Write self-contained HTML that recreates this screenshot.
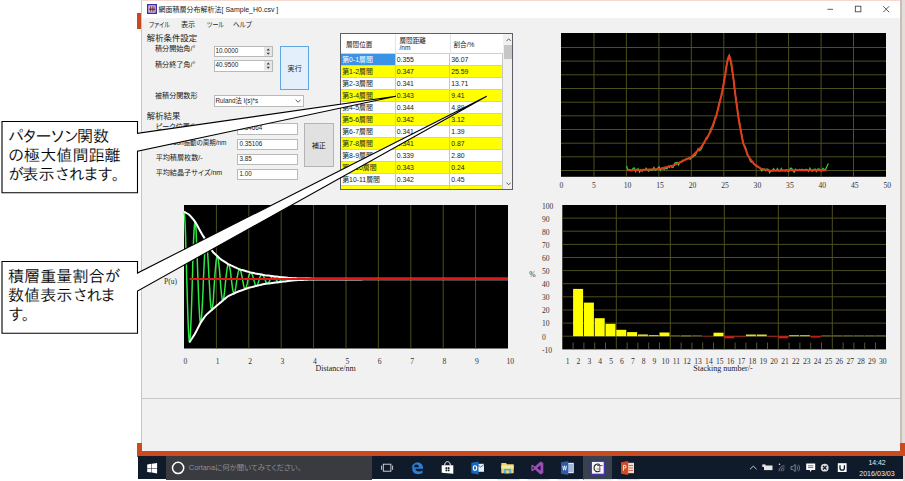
<!DOCTYPE html>
<html lang="ja"><head><meta charset="utf-8"><title>網面積層分布解析法</title>
<style>
html,body{margin:0;padding:0}
body{width:905px;height:481px;overflow:hidden;background:#fff;position:relative;font-family:"Liberation Sans","Noto Sans CJK JP",sans-serif;color:#111}
.a{position:absolute}
.ui{font-size:7.1px;line-height:9px;white-space:nowrap;color:#1a1a1a;font-feature-settings:"palt"}
.h{font-size:8.4px;line-height:10px;white-space:nowrap;color:#1a1a1a;font-feature-settings:"palt"}
.in{position:absolute;background:#fff;border:1px solid #b9b9b9;box-sizing:border-box;font-size:6.3px;line-height:8.4px;padding-left:1px;color:#222;white-space:nowrap;overflow:hidden}
#win{left:141.5px;top:1.2px;width:758.5px;height:450.3px;background:#f1f1f1}
#ttl{left:141.5px;top:1.2px;width:758.5px;height:17.3px;background:#fff}
#tbl{left:340px;top:33px;width:173px;height:157px;background:#fff;border:1px solid #5c5f66;box-sizing:border-box;overflow:hidden}
#tbl .hd{position:absolute;left:0;top:0;width:162px;height:20px;border-bottom:1px solid #cfcfcf;box-sizing:border-box}
#tbl .r{position:absolute;left:0;width:162px;box-sizing:border-box;border-bottom:1px solid #cdcdcd;background:#fff}
#tbl .r.y{background:#ffff00}
#tbl .c{position:absolute;top:0;height:100%;box-sizing:border-box;border-right:1px solid #c6c6c6;font-size:6.9px;line-height:11px;padding-left:1.2px;white-space:nowrap;color:#222;overflow:hidden}
#tbl .c1{left:0;width:54.5px;padding-left:1.2px}
#tbl .c2{left:54.5px;width:54.5px}
#tbl .c3{left:109px;width:53px}
#tbl .sel{background:#3a93e6;color:#fff}
#tbl .hc{position:absolute;font-size:6.6px;line-height:7.4px;white-space:nowrap;color:#222}
#tbl .vl{position:absolute;top:0;width:1px;height:19.5px;background:#e4e4e4}
svg text.tk{font-family:"Liberation Serif",serif;font-size:7.6px;fill:#333}
svg text.ax{font-family:"Liberation Serif",serif;font-size:8px;fill:#222}
.co .k{letter-spacing:-2.3px}
.co{position:absolute;left:8px;-webkit-text-stroke:0.12px #fff;font-family:"IPAGothic","Noto Sans CJK JP",sans-serif;font-size:16.1px;line-height:19.3px;color:#000;white-space:nowrap}
#tb{left:137.5px;top:456.3px;width:765px;height:23.2px;background:#0f1a2b}
.tbt{position:absolute;color:#e8e8e8;font-size:6.9px;line-height:8px;white-space:nowrap;text-align:center}
</style></head><body>
<!-- backdrop -->
<div class="a" style="left:141px;top:0;width:764px;height:1.3px;background:#f7d8ce"></div>
<div class="a" style="left:900px;top:0;width:5px;height:445px;background:#e2dedc"></div><div class="a" style="left:900.3px;top:0;width:1.7px;height:445px;background:#cbbdb2"></div>
<div class="a" style="left:137px;top:13px;width:5px;height:15.5px;background:#c8491f"></div>
<div class="a" style="left:137px;top:443px;width:768px;height:13.5px;background:#cc4a1d"></div>
<div class="a" style="left:140.5px;top:1px;width:1px;height:442px;background:#c9c2bd"></div>
<div class="a" id="win"></div>
<div class="a" id="ttl"></div>
<div class="a" style="left:141.5px;top:398px;width:758.5px;height:1px;background:#cbc5cc"></div>

<!-- title bar -->
<svg class="a" style="left:146.5px;top:3.5px" width="10" height="10" viewBox="0 0 10 10"><rect x="0.7" y="0.7" width="8.6" height="8.6" fill="#efe2ee" stroke="#3a2fb0" stroke-width="1.4"/><path d="M3.3 2.2v5.6M5.2 2.2v5.6M7 2.2v5.6" stroke="#7a2030" stroke-width="1"/><path d="M2 5.2h6" stroke="#201a70" stroke-width="0.9"/></svg>
<div class="a ui" style="left:158.5px;top:4.6px;font-size:7px;color:#222">網面積層分布解析法[ Sample_H0.csv ]</div>
<svg class="a" style="left:820px;top:2px" width="80" height="16" viewBox="0 0 80 16"><path d="M7.5 7.3h5.5" stroke="#333" stroke-width="0.8"/><rect x="35.3" y="4.2" width="5.6" height="5.6" fill="none" stroke="#333" stroke-width="0.8"/><path d="M63.2 4.2l6 6M69.2 4.2l-6 6" stroke="#333" stroke-width="0.8"/></svg>

<!-- menu -->
<div class="a ui" style="left:149px;top:21.2px;transform:scaleX(0.85);transform-origin:0 0">ファイル</div>
<div class="a ui" style="left:181px;top:21.2px">表示</div>
<div class="a ui" style="left:207px;top:21.2px;transform:scaleX(0.84);transform-origin:0 0">ツール</div>
<div class="a ui" style="left:233.3px;top:21.2px;transform:scaleX(0.93);transform-origin:0 0">ヘルプ</div>

<!-- settings -->
<div class="a h" style="left:146.8px;top:33px">解析条件設定</div>
<div class="a ui" style="left:155px;top:45px">積分開始角/°</div>
<div class="a ui" style="left:155px;top:61px">積分終了角/°</div>
<div class="in" style="left:213.5px;top:45.6px;width:59.5px;height:11.2px">10.0000</div>
<div class="in" style="left:213.5px;top:60.4px;width:59.5px;height:11.2px">40.9500</div>
<svg class="a" style="left:263.5px;top:46.6px" width="8.5" height="9.4" viewBox="0 0 8.5 9.4"><rect width="8.5" height="9.4" fill="#e6e6e6"/><path d="M2.6 3.6L4.25 1.6L5.9 3.6Z M2.6 5.8L4.25 7.8L5.9 5.8Z" fill="#333"/></svg>
<svg class="a" style="left:263.5px;top:61.4px" width="8.5" height="9.4" viewBox="0 0 8.5 9.4"><rect width="8.5" height="9.4" fill="#e6e6e6"/><path d="M2.6 3.6L4.25 1.6L5.9 3.6Z M2.6 5.8L4.25 7.8L5.9 5.8Z" fill="#333"/></svg>
<div class="a ui" style="left:280px;top:45.6px;width:29.3px;height:44px;box-sizing:border-box;background:#e3f0fb;border:1px solid #5fa5e2;text-align:center;line-height:45px">実行</div>
<div class="a ui" style="left:155px;top:92px">被積分関数形</div>
<div class="in" style="left:213.5px;top:94.6px;width:90.2px;height:12.4px;line-height:10.4px">Ruland法 I(s)*s</div>
<svg class="a" style="left:295px;top:98.8px" width="6.4" height="4.2" viewBox="0 0 6 4"><path d="M0.6 0.6L3 3.1L5.4 0.6" fill="none" stroke="#444" stroke-width="0.8"/></svg>

<!-- results -->
<div class="a h" style="left:146.8px;top:111.2px">解析結果</div>
<div class="a ui" style="left:155.7px;top:122.7px">ピーク位置/°</div>
<div class="a ui" style="left:155.7px;top:139.3px;transform:scaleX(0.91);transform-origin:0 0">Patterson振動の周期/nm</div>
<div class="a ui" style="left:155.7px;top:154.3px">平均積層枚数/-</div>
<div class="a ui" style="left:155.7px;top:169.1px">平均結晶子サイズ/nm</div>
<div class="in" style="left:237.4px;top:123.4px;width:60.3px;height:11.3px">0.34664</div>
<div class="in" style="left:237.4px;top:138.5px;width:60.3px;height:11.3px">0.35106</div>
<div class="in" style="left:237.4px;top:153.6px;width:60.3px;height:11.3px">3.85</div>
<div class="in" style="left:237.4px;top:168.7px;width:60.3px;height:11.3px">1.00</div>
<div class="a ui" style="left:304.2px;top:123.4px;width:29.4px;height:43.6px;box-sizing:border-box;background:#e1e1e1;border:1px solid #b4b4b4;text-align:center;line-height:45px">補正</div>

<!-- table -->
<div class="a" id="tbl">
<div class="hd"></div>
<div class="vl" style="left:54px"></div><div class="vl" style="left:108.5px"></div><div class="vl" style="left:161.5px"></div>
<div class="hc" style="left:5px;top:6.8px">層間位置</div>
<div class="hc" style="left:58.5px;top:3px">層間距離<br>/nm</div>
<div class="hc" style="left:112.5px;top:6.8px">割合/%</div>
<div class="r" style="top:20.4px;height:12.0px"><div class="c c1 sel">第0-1層間</div><div class="c c2">0.355</div><div class="c c3">36.07</div></div><div class="r y" style="top:32.4px;height:12.0px"><div class="c c1">第1-2層間</div><div class="c c2">0.347</div><div class="c c3">25.59</div></div><div class="r" style="top:44.4px;height:12.0px"><div class="c c1">第2-3層間</div><div class="c c2">0.341</div><div class="c c3">13.71</div></div><div class="r y" style="top:56.4px;height:12.0px"><div class="c c1">第3-4層間</div><div class="c c2">0.343</div><div class="c c3">9.41</div></div><div class="r" style="top:68.4px;height:12.0px"><div class="c c1">第4-5層間</div><div class="c c2">0.344</div><div class="c c3">4.89</div></div><div class="r y" style="top:80.4px;height:12.0px"><div class="c c1">第5-6層間</div><div class="c c2">0.342</div><div class="c c3">3.12</div></div><div class="r" style="top:92.4px;height:12.0px"><div class="c c1">第6-7層間</div><div class="c c2">0.341</div><div class="c c3">1.39</div></div><div class="r y" style="top:104.4px;height:12.0px"><div class="c c1">第7-8層間</div><div class="c c2">0.341</div><div class="c c3">0.87</div></div><div class="r" style="top:116.4px;height:12.0px"><div class="c c1">第8-9層間</div><div class="c c2">0.339</div><div class="c c3">2.80</div></div><div class="r y" style="top:128.4px;height:12.0px"><div class="c c1">第9-10層間</div><div class="c c2">0.343</div><div class="c c3">0.24</div></div><div class="r" style="top:140.4px;height:12.0px"><div class="c c1">第10-11層間</div><div class="c c2">0.342</div><div class="c c3">0.45</div></div><div class="r y" style="top:152.4px;height:3.5px"><div class="c c1"></div><div class="c c2"></div><div class="c c3"></div></div>
<div class="a" style="left:162px;top:0;width:10px;height:155px;background:#f0f0f0"></div>
<div class="a" style="left:163.3px;top:10.8px;width:7.6px;height:14px;background:#c6c6c6"></div>
<svg class="a" style="left:164.5px;top:4px" width="5.4" height="3.6" viewBox="0 0 6 4"><path d="M0.6 3.4L3 0.9L5.4 3.4" fill="none" stroke="#444" stroke-width="0.9"/></svg>
<svg class="a" style="left:164.5px;top:148.3px" width="5.4" height="3.6" viewBox="0 0 6 4"><path d="M0.6 0.6L3 3.1L5.4 0.6" fill="none" stroke="#444" stroke-width="0.9"/></svg>
</div>

<!-- charts -->
<svg class="a" style="left:0;top:0" width="905" height="481" viewBox="0 0 905 481">
<rect x="184.0" y="205.0" width="324.0" height="143.5" fill="#000"/><line x1="216.4" y1="205.0" x2="216.4" y2="348.5" stroke="#4e4e1e" stroke-width="1"/><line x1="248.8" y1="205.0" x2="248.8" y2="348.5" stroke="#4e4e1e" stroke-width="1"/><line x1="281.2" y1="205.0" x2="281.2" y2="348.5" stroke="#4e4e1e" stroke-width="1"/><line x1="313.6" y1="205.0" x2="313.6" y2="348.5" stroke="#4e4e1e" stroke-width="1"/><line x1="346.0" y1="205.0" x2="346.0" y2="348.5" stroke="#4e4e1e" stroke-width="1"/><line x1="378.4" y1="205.0" x2="378.4" y2="348.5" stroke="#4e4e1e" stroke-width="1"/><line x1="410.8" y1="205.0" x2="410.8" y2="348.5" stroke="#4e4e1e" stroke-width="1"/><line x1="443.2" y1="205.0" x2="443.2" y2="348.5" stroke="#4e4e1e" stroke-width="1"/><line x1="475.6" y1="205.0" x2="475.6" y2="348.5" stroke="#4e4e1e" stroke-width="1"/><path d="M184.0 211.6 L184.1 211.8 L184.2 212.1 L184.3 212.7 L184.4 213.4 L184.5 214.4 L184.6 215.5 L184.7 216.9 L184.8 218.4 L184.9 220.1 L185.0 222.0 L185.1 224.0 L185.2 226.2 L185.3 228.6 L185.4 231.1 L185.5 233.7 L185.6 236.5 L185.7 239.4 L185.7 242.4 L185.8 245.5 L185.9 248.7 L186.0 252.0 L186.1 255.4 L186.2 258.8 L186.3 262.3 L186.4 265.8 L186.5 269.4 L186.6 273.0 L186.7 276.6 L186.8 280.2 L186.9 283.7 L187.0 287.3 L187.1 290.8 L187.2 294.2 L187.3 297.6 L187.4 301.0 L187.5 304.3 L187.6 307.4 L187.7 310.5 L187.8 313.5 L187.9 316.4 L188.0 319.2 L188.1 321.8 L188.2 324.3 L188.3 326.7 L188.4 328.9 L188.5 331.0 L188.6 332.9 L188.7 334.6 L188.8 336.2 L188.9 337.6 L189.0 338.8 L189.1 339.8 L189.2 340.7 L189.2 341.3 L189.3 341.8 L189.4 342.1 L189.5 342.1 L189.6 342.0 L189.7 341.6 L189.8 341.0 L189.9 340.3 L190.0 339.4 L190.1 338.3 L190.2 337.0 L190.3 335.6 L190.4 334.0 L190.5 332.2 L190.6 330.3 L190.7 328.3 L190.8 326.1 L190.9 323.7 L191.0 321.3 L191.1 318.7 L191.2 316.1 L191.3 313.3 L191.4 310.4 L191.5 307.5 L191.6 304.5 L191.7 301.4 L191.8 298.3 L191.9 295.1 L192.0 291.9 L192.1 288.7 L192.2 285.5 L192.3 282.2 L192.4 279.0 L192.5 275.7 L192.6 272.4 L192.7 269.1 L192.7 265.9 L192.8 262.7 L192.9 259.6 L193.0 256.6 L193.1 253.6 L193.2 250.8 L193.3 248.0 L193.4 245.3 L193.5 242.8 L193.6 240.3 L193.7 238.0 L193.8 235.8 L193.9 233.8 L194.0 231.9 L194.1 230.1 L194.2 228.5 L194.3 227.1 L194.4 225.8 L194.5 224.7 L194.6 223.8 L194.7 223.0 L194.8 222.4 L194.9 222.0 L195.0 221.7 L195.1 221.7 L195.2 221.8 L195.3 222.1 L195.4 222.6 L195.5 223.3 L195.6 224.1 L195.7 225.1 L195.8 226.2 L195.9 227.5 L196.0 228.9 L196.1 230.5 L196.2 232.2 L196.2 234.1 L196.3 236.0 L196.4 238.1 L196.5 240.3 L196.6 242.6 L196.7 245.0 L196.8 247.5 L196.9 250.0 L197.0 252.6 L197.1 255.3 L197.2 258.1 L197.3 260.9 L197.4 263.7 L197.5 266.5 L197.6 269.4 L197.7 272.3 L197.8 275.2 L197.9 278.0 L198.0 280.8 L198.1 283.4 L198.2 286.1 L198.3 288.6 L198.4 291.2 L198.5 293.6 L198.6 296.0 L198.7 298.4 L198.8 300.6 L198.9 302.8 L199.0 304.9 L199.1 306.9 L199.2 308.8 L199.3 310.5 L199.4 312.2 L199.5 313.8 L199.6 315.2 L199.6 316.5 L199.7 317.7 L199.8 318.8 L199.9 319.7 L200.0 320.5 L200.1 321.2 L200.2 321.7 L200.3 322.1 L200.4 322.4 L200.5 322.5 L200.6 322.6 L200.7 322.5 L200.8 322.3 L200.9 322.0 L201.0 321.5 L201.1 320.9 L201.2 320.2 L201.3 319.4 L201.4 318.5 L201.5 317.4 L201.6 316.2 L201.7 315.0 L201.8 313.6 L201.9 312.1 L202.0 310.6 L202.1 308.9 L202.2 307.2 L202.3 305.4 L202.4 303.6 L202.5 301.6 L202.6 299.7 L202.7 297.6 L202.8 295.6 L202.9 293.5 L203.0 291.3 L203.1 289.2 L203.1 287.0 L203.2 284.8 L203.3 282.6 L203.4 280.4 L203.5 278.2 L203.6 275.9 L203.7 273.6 L203.8 271.4 L203.9 269.2 L204.0 267.0 L204.1 264.9 L204.2 262.9 L204.3 260.9 L204.4 259.0 L204.5 257.1 L204.6 255.4 L204.7 253.7 L204.8 252.1 L204.9 250.6 L205.0 249.2 L205.1 247.9 L205.2 246.8 L205.3 245.7 L205.4 244.7 L205.5 243.9 L205.6 243.1 L205.7 242.5 L205.8 242.0 L205.9 241.6 L206.0 241.3 L206.1 241.1 L206.2 241.1 L206.3 241.1 L206.4 241.3 L206.5 241.6 L206.6 242.0 L206.6 242.5 L206.7 243.1 L206.8 243.9 L206.9 244.7 L207.0 245.6 L207.1 246.6 L207.2 247.7 L207.3 248.9 L207.4 250.2 L207.5 251.5 L207.6 252.9 L207.7 254.4 L207.8 255.9 L207.9 257.5 L208.0 259.2 L208.1 260.9 L208.2 262.6 L208.3 264.4 L208.4 266.1 L208.5 268.0 L208.6 269.8 L208.7 271.6 L208.8 273.5 L208.9 275.3 L209.0 277.2 L209.1 279.0 L209.2 280.8 L209.3 282.6 L209.4 284.4 L209.5 286.2 L209.6 287.9 L209.7 289.6 L209.8 291.3 L209.9 292.9 L210.0 294.4 L210.0 295.9 L210.1 297.4 L210.2 298.7 L210.3 300.1 L210.4 301.3 L210.5 302.5 L210.6 303.6 L210.7 304.6 L210.8 305.5 L210.9 306.4 L211.0 307.1 L211.1 307.8 L211.2 308.4 L211.3 308.9 L211.4 309.3 L211.5 309.6 L211.6 309.8 L211.7 309.9 L211.8 309.9 L211.9 309.9 L212.0 309.7 L212.1 309.4 L212.2 309.1 L212.3 308.7 L212.4 308.1 L212.5 307.5 L212.6 306.9 L212.7 306.1 L212.8 305.2 L212.9 304.3 L213.0 303.3 L213.1 302.3 L213.2 301.2 L213.3 300.0 L213.4 298.7 L213.5 297.5 L213.5 296.1 L213.6 294.7 L213.7 293.3 L213.8 291.9 L213.9 290.4 L214.0 288.9 L214.1 287.3 L214.2 285.8 L214.3 284.2 L214.4 282.7 L214.5 281.1 L214.6 279.5 L214.7 278.1 L214.8 276.7 L214.9 275.4 L215.0 274.0 L215.1 272.7 L215.2 271.4 L215.3 270.2 L215.4 269.0 L215.5 267.8 L215.6 266.7 L215.7 265.6 L215.8 264.5 L215.9 263.5 L216.0 262.6 L216.1 261.7 L216.2 260.9 L216.3 260.2 L216.4 259.5 L216.5 258.8 L216.6 258.3 L216.7 257.8 L216.8 257.4 L216.9 257.0 L217.0 256.7 L217.0 256.5 L217.1 256.3 L217.2 256.2 L217.3 256.2 L217.4 256.3 L217.5 256.4 L217.6 256.6 L217.7 256.9 L217.8 257.2 L217.9 257.6 L218.0 258.0 L218.1 258.5 L218.2 259.1 L218.3 259.7 L218.4 260.4 L218.5 261.1 L218.6 261.9 L218.7 262.7 L218.8 263.6 L218.9 264.5 L219.0 265.4 L219.1 266.4 L219.2 267.4 L219.3 268.4 L219.4 269.4 L219.5 270.5 L219.6 271.6 L219.7 272.7 L219.8 273.8 L219.9 274.9 L220.0 276.0 L220.1 277.2 L220.2 278.3 L220.3 279.4 L220.4 280.7 L220.4 282.0 L220.5 283.3 L220.6 284.5 L220.7 285.7 L220.8 286.9 L220.9 288.1 L221.0 289.2 L221.1 290.2 L221.2 291.3 L221.3 292.3 L221.4 293.2 L221.5 294.1 L221.6 295.0 L221.7 295.8 L221.8 296.5 L221.9 297.2 L222.0 297.8 L222.1 298.3 L222.2 298.8 L222.3 299.3 L222.4 299.6 L222.5 299.9 L222.6 300.2 L222.7 300.3 L222.8 300.4 L222.9 300.5 L223.0 300.4 L223.1 300.3 L223.2 300.2 L223.3 300.0 L223.4 299.7 L223.5 299.4 L223.6 299.0 L223.7 298.5 L223.8 298.0 L223.9 297.4 L223.9 296.8 L224.0 296.1 L224.1 295.4 L224.2 294.7 L224.3 293.9 L224.4 293.0 L224.5 292.2 L224.6 291.3 L224.7 290.3 L224.8 289.4 L224.9 288.4 L225.0 287.4 L225.1 286.4 L225.2 285.3 L225.3 284.3 L225.4 283.2 L225.5 282.2 L225.6 281.1 L225.7 280.1 L225.8 279.0 L225.9 278.1 L226.0 277.2 L226.1 276.3 L226.2 275.5 L226.3 274.6 L226.4 273.8 L226.5 273.0 L226.6 272.2 L226.7 271.5 L226.8 270.8 L226.9 270.1 L227.0 269.4 L227.1 268.8 L227.2 268.2 L227.3 267.6 L227.4 267.1 L227.4 266.6 L227.5 266.2 L227.6 265.8 L227.7 265.5 L227.8 265.2 L227.9 264.9 L228.0 264.7 L228.1 264.5 L228.2 264.4 L228.3 264.3 L228.4 264.2 L228.5 264.2 L228.6 264.3 L228.7 264.3 L228.8 264.5 L228.9 264.6 L229.0 264.8 L229.1 265.1 L229.2 265.4 L229.3 265.7 L229.4 266.1 L229.5 266.5 L229.6 266.9 L229.7 267.4 L229.8 267.9 L229.9 268.5 L230.0 269.0 L230.1 269.6 L230.2 270.2 L230.3 270.9 L230.4 271.5 L230.5 272.2 L230.6 272.9 L230.7 273.6 L230.8 274.3 L230.9 275.1 L230.9 275.8 L231.0 276.5 L231.1 277.3 L231.2 278.0 L231.3 278.8 L231.4 279.6 L231.5 280.4 L231.6 281.3 L231.7 282.1 L231.8 282.9 L231.9 283.7 L232.0 284.5 L232.1 285.3 L232.2 286.0 L232.3 286.7 L232.4 287.4 L232.5 288.1 L232.6 288.7 L232.7 289.3 L232.8 289.8 L232.9 290.4 L233.0 290.8 L233.1 291.3 L233.2 291.7 L233.3 292.1 L233.4 292.4 L233.5 292.7 L233.6 292.9 L233.7 293.1 L233.8 293.3 L233.9 293.4 L234.0 293.4 L234.1 293.5 L234.2 293.4 L234.3 293.4 L234.3 293.3 L234.4 293.1 L234.5 292.9 L234.6 292.7 L234.7 292.4 L234.8 292.1 L234.9 291.8 L235.0 291.4 L235.1 290.9 L235.2 290.5 L235.3 290.0 L235.4 289.5 L235.5 288.9 L235.6 288.4 L235.7 287.8 L235.8 287.2 L235.9 286.5 L236.0 285.9 L236.1 285.2 L236.2 284.5 L236.3 283.8 L236.4 283.1 L236.5 282.4 L236.6 281.7 L236.7 280.9 L236.8 280.2 L236.9 279.5 L237.0 278.8 L237.1 278.2 L237.2 277.6 L237.3 277.0 L237.4 276.5 L237.5 275.9 L237.6 275.4 L237.7 274.9 L237.8 274.4 L237.8 273.9 L237.9 273.4 L238.0 273.0 L238.1 272.5 L238.2 272.1 L238.3 271.8 L238.4 271.4 L238.5 271.1 L238.6 270.8 L238.7 270.5 L238.8 270.3 L238.9 270.0 L239.0 269.9 L239.1 269.7 L239.2 269.6 L239.3 269.4 L239.4 269.4 L239.5 269.3 L239.6 269.3 L239.7 269.3 L239.8 269.3 L239.9 269.4 L240.0 269.5 L240.1 269.6 L240.2 269.7 L240.3 269.9 L240.4 270.1 L240.5 270.3 L240.6 270.6 L240.7 270.9 L240.8 271.2 L240.9 271.5 L241.0 271.8 L241.1 272.2 L241.2 272.5 L241.3 272.9 L241.3 273.4 L241.4 273.8 L241.5 274.2 L241.6 274.7 L241.7 275.1 L241.8 275.6 L241.9 276.1 L242.0 276.6 L242.1 277.0 L242.2 277.5 L242.3 278.0 L242.4 278.5 L242.5 279.0 L242.6 279.6 L242.7 280.2 L242.8 280.8 L242.9 281.4 L243.0 281.9 L243.1 282.5 L243.2 283.0 L243.3 283.6 L243.4 284.1 L243.5 284.6 L243.6 285.0 L243.7 285.5 L243.8 285.9 L243.9 286.3 L244.0 286.7 L244.1 287.0 L244.2 287.4 L244.3 287.7 L244.4 287.9 L244.5 288.2 L244.6 288.4 L244.7 288.6 L244.8 288.7 L244.8 288.9 L244.9 288.9 L245.0 289.0 L245.1 289.0 L245.2 289.0 L245.3 289.0 L245.4 289.0 L245.5 288.9 L245.6 288.7 L245.7 288.6 L245.8 288.4 L245.9 288.2 L246.0 288.0 L246.1 287.7 L246.2 287.5 L246.3 287.2 L246.4 286.8 L246.5 286.5 L246.6 286.1 L246.7 285.7 L246.8 285.3 L246.9 284.9 L247.0 284.5 L247.1 284.0 L247.2 283.6 L247.3 283.1 L247.4 282.6 L247.5 282.2 L247.6 281.7 L247.7 281.2 L247.8 280.7 L247.9 280.2 L248.0 279.7 L248.1 279.2 L248.2 278.7 L248.2 278.3 L248.3 278.0 L248.4 277.6 L248.5 277.2 L248.6 276.8 L248.7 276.5 L248.8 276.1 L248.9 275.8 L249.0 275.5 L249.1 275.2 L249.2 274.9 L249.3 274.6 L249.4 274.3 L249.5 274.1 L249.6 273.8 L249.7 273.6 L249.8 273.4 L249.9 273.2 L250.0 273.1 L250.1 272.9 L250.2 272.8 L250.3 272.7 L250.4 272.6 L250.5 272.6 L250.6 272.5 L250.7 272.5 L250.8 272.5 L250.9 272.5 L251.0 272.5 L251.1 272.6 L251.2 272.6 L251.3 272.7 L251.4 272.8 L251.5 272.9 L251.6 273.1 L251.7 273.2 L251.7 273.4 L251.8 273.6 L251.9 273.8 L252.0 274.0 L252.1 274.3 L252.2 274.5 L252.3 274.8 L252.4 275.0 L252.5 275.3 L252.6 275.6 L252.7 275.9 L252.8 276.2 L252.9 276.5 L253.0 276.8 L253.1 277.1 L253.2 277.5 L253.3 277.8 L253.4 278.1 L253.5 278.5 L253.6 278.8 L253.7 279.1 L253.8 279.6 L253.9 280.0 L254.0 280.4 L254.1 280.8 L254.2 281.2 L254.3 281.5 L254.4 281.9 L254.5 282.3 L254.6 282.6 L254.7 282.9 L254.8 283.3 L254.9 283.6 L255.0 283.9 L255.1 284.1 L255.2 284.4 L255.2 284.6 L255.3 284.8 L255.4 285.0 L255.5 285.2 L255.6 285.4 L255.7 285.5 L255.8 285.6 L255.9 285.7 L256.0 285.8 L256.1 285.9 L256.2 285.9 L256.3 285.9 L256.4 285.9 L256.5 285.9 L256.6 285.8 L256.7 285.8 L256.8 285.7 L256.9 285.6 L257.0 285.4 L257.1 285.3 L257.2 285.1 L257.3 285.0 L257.4 284.8 L257.5 284.5 L257.6 284.3 L257.7 284.1 L257.8 283.8 L257.9 283.5 L258.0 283.3 L258.1 283.0 L258.2 282.7 L258.3 282.4 L258.4 282.0 L258.5 281.7 L258.6 281.4 L258.6 281.1 L258.7 280.7 L258.8 280.4 L258.9 280.0 L259.0 279.7 L259.1 279.3 L259.2 279.0 L259.3 278.7 L259.4 278.5 L259.5 278.2 L259.6 278.0 L259.7 277.7 L259.8 277.5 L259.9 277.2 L260.0 277.0 L260.1 276.8 L260.2 276.6 L260.3 276.4 L260.4 276.2 L260.5 276.0 L260.6 275.8 L260.7 275.6 L260.8 275.5 L260.9 275.3 L261.0 275.2 L261.1 275.1 L261.2 275.0 L261.3 274.9 L261.4 274.8 L261.5 274.8 L261.6 274.7 L261.7 274.7 L261.8 274.7 L261.9 274.7 L262.0 274.7 L262.1 274.7 L262.1 274.7 L262.2 274.7 L262.3 274.8 L262.4 274.9 L262.5 275.0 L262.6 275.0 L262.7 275.1 L262.8 275.3 L262.9 275.4 L263.0 275.5 L263.1 275.7 L263.2 275.8 L263.3 276.0 L263.4 276.1 L263.5 276.3 L263.6 276.5 L263.7 276.7 L263.8 276.9 L263.9 277.1 L264.0 277.3 L264.1 277.5 L264.2 277.7 L264.3 277.9 L264.4 278.1 L264.5 278.3 L264.6 278.5 L264.7 278.7 L264.8 278.9 L264.9 279.2 L265.0 279.5 L265.1 279.7 L265.2 280.0 L265.3 280.2 L265.4 280.5 L265.5 280.7 L265.6 281.0 L265.6 281.2 L265.7 281.4 L265.8 281.7 L265.9 281.9 L266.0 282.1 L266.1 282.3 L266.2 282.4 L266.3 282.6 L266.4 282.8 L266.5 282.9 L266.6 283.0 L266.7 283.2 L266.8 283.3 L266.9 283.4 L267.0 283.4 L267.1 283.5 L267.2 283.5 L267.3 283.6 L267.4 283.6 L267.5 283.6 L267.6 283.6 L267.7 283.6 L267.8 283.6 L267.9 283.5 L268.0 283.5 L268.1 283.4 L268.2 283.3 L268.3 283.2 L268.4 283.1 L268.5 283.0 L268.6 282.8 L268.7 282.7 L268.8 282.5 L268.9 282.4 L269.0 282.2 L269.1 282.0 L269.1 281.8 L269.2 281.6 L269.3 281.4 L269.4 281.2 L269.5 281.0 L269.6 280.8 L269.7 280.6 L269.8 280.3 L269.9 280.1 L270.0 279.9 L270.1 279.6 L270.2 279.4 L270.3 279.2 L270.4 278.9 L270.5 278.8 L270.6 278.6 L270.7 278.4 L270.8 278.3 L270.9 278.1 L271.0 278.0 L271.1 277.8 L271.2 277.7 L271.3 277.5 L271.4 277.4 L271.5 277.2 L271.6 277.1 L271.7 277.0 L271.8 276.9 L271.9 276.8 L272.0 276.7 L272.1 276.6 L272.2 276.5 L272.3 276.4 L272.4 276.4 L272.5 276.3 L272.5 276.3 L272.6 276.2 L272.7 276.2 L272.8 276.2 L272.9 276.2 L273.0 276.2 L273.1 276.2 L273.2 276.2 L273.3 276.2 L273.4 276.3 L273.5 276.3 L273.6 276.3 L273.7 276.4 L273.8 276.5 L273.9 276.5 L274.0 276.6 L274.1 276.7 L274.2 276.8 L274.3 276.9 L274.4 277.0 L274.5 277.1 L274.6 277.2 L274.7 277.3 L274.8 277.4 L274.9 277.5 L275.0 277.7 L275.1 277.8 L275.2 277.9 L275.3 278.0 L275.4 278.2 L275.5 278.3 L275.6 278.5 L275.7 278.6 L275.8 278.7 L275.9 278.9 L276.0 279.0 L276.0 279.2 L276.1 279.4 L276.2 279.6 L276.3 279.8 L276.4 279.9 L276.5 280.1 L276.6 280.3 L276.7 280.5 L276.8 280.6 L276.9 280.8 L277.0 280.9 L277.1 281.1 L277.2 281.2 L277.3 281.4 L277.4 281.5 L277.5 281.6 L277.6 281.7 L277.7 281.8 L277.8 281.9 L277.9 281.9 L278.0 282.0 L278.1 282.1 L278.2 282.1 L278.3 282.2 L278.4 282.2 L278.5 282.2 L278.6 282.2 L278.7 282.2 L278.8 282.2 L278.9 282.2 L279.0 282.2 L279.1 282.1 L279.2 282.1 L279.3 282.0 L279.4 281.9 L279.5 281.9 L279.5 281.8 L279.6 281.7 L279.7 281.6 L279.8 281.5 L279.9 281.4 L280.0 281.3 L280.1 281.1 L280.2 281.0 L280.3 280.9 L280.4 280.7 L280.5 280.6 L280.6 280.5 L280.7 280.3 L280.8 280.2 L280.9 280.0 L281.0 279.8 L281.1 279.7 L281.2 279.5 L281.3 279.4 L281.4 279.2 L281.5 279.1 L281.6 278.9 L281.7 278.8 L281.8 278.7 L281.9 278.7 L282.0 278.6 L282.1 278.5 L282.2 278.4 L282.3 278.3 L282.4 278.2 L282.5 278.1 L282.6 278.1 L282.7 278.0 L282.8 277.9 L282.9 277.9 L282.9 277.8 L283.0 277.8 L283.1 277.7 L283.2 277.7 L283.3 277.6 L283.4 277.6 L283.5 277.5 L283.6 277.5 L283.7 277.5 L283.8 277.5 L283.9 277.5 L284.0 277.5 L284.1 277.5 L284.2 277.5 L284.3 277.5 L284.4 277.5 L284.5 277.5 L284.6 277.5 L284.7 277.5 L284.8 277.6 L284.9 277.6 L285.0 277.6 L285.1 277.7 L285.2 277.7 L285.3 277.8 L285.4 277.8 L285.5 277.9 L285.6 277.9 L285.7 278.0 L285.8 278.0 L285.9 278.1 L286.0 278.2 L286.1 278.2 L286.2 278.3 L286.3 278.4 L286.4 278.4 L286.4 278.5 L286.5 278.6 L286.6 278.7 L286.7 278.7 L286.8 278.8 L286.9 278.9 L287.0 279.0 L287.1 279.0 L287.2 279.2 L287.3 279.3 L287.4 279.4 L287.5 279.5 L287.6 279.6 L287.7 279.7 L287.8 279.8 L287.9 279.9 L288.0 280.0 L288.1 280.1 L288.2 280.2 L288.3 280.3 L288.4 280.3 L288.5 280.4 L288.6 280.5 L288.7 280.5 L288.8 280.6 L288.9 280.6 L289.0 280.7 L289.1 280.7 L289.2 280.8 L289.3 280.8 L289.4 280.8 L289.5 280.8 L289.6 280.8 L289.7 280.8 L289.8 280.8 L289.9 280.8 L289.9 280.8 L290.0 280.8 L290.1 280.8 L290.2 280.7 L290.3 280.7 L290.4 280.7 L290.5 280.6 L290.6 280.6 L290.7 280.5 L290.8 280.5 L290.9 280.4 L291.0 280.4 L291.1 280.3 L291.2 280.2 L291.3 280.1 L291.4 280.1 L291.5 280.0 L291.6 279.9 L291.7 279.8 L291.8 279.8 L291.9 279.7 L292.0 279.6 L292.1 279.5 L292.2 279.4 L292.3 279.3 L292.4 279.2 L292.5 279.2 L292.6 279.1 L292.7 279.0 L292.8 279.0 L292.9 278.9 L293.0 278.9 L293.1 278.8 L293.2 278.8 L293.3 278.7 L293.4 278.7 L293.4 278.7 L293.5 278.6 L293.6 278.6 L293.7 278.6 L293.8 278.6 L293.9 278.5 L294.0 278.5 L294.1 278.5 L294.2 278.5 L294.3 278.4 L294.4 278.4 L294.5 278.4 L294.6 278.4 L294.7 278.4 L294.8 278.4 L294.9 278.3 L295.0 278.3 L295.1 278.3 L295.2 278.3 L295.3 278.3 L295.4 278.3 L295.5 278.3 L295.6 278.3 L295.7 278.3 L295.8 278.3 L295.9 278.4 L296.0 278.4 L296.1 278.4 L296.2 278.4 L296.3 278.4 L296.4 278.4 L296.5 278.4 L296.6 278.5 L296.7 278.5 L296.8 278.5 L296.8 278.5 L296.9 278.6 L297.0 278.6 L297.1 278.6 L297.2 278.7 L297.3 278.7 L297.4 278.7 L297.5 278.8 L297.6 278.8 L297.7 278.8 L297.8 278.9 L297.9 278.9 L298.0 278.9 L298.1 279.0 L298.2 279.0 L298.3 279.0 L298.4 279.1 L298.5 279.2 L298.6 279.2 L298.7 279.3 L298.8 279.3 L298.9 279.4 L299.0 279.4 L299.1 279.5 L299.2 279.5 L299.3 279.6 L299.4 279.6 L299.5 279.7 L299.6 279.7 L299.7 279.8 L299.8 279.8 L299.9 279.8 L300.0 279.8 L300.1 279.9 L300.2 279.9 L300.3 279.9 L300.3 279.9 L300.4 280.0 L300.5 280.0 L300.6 280.0 L300.7 280.0 L300.8 280.0 L300.9 280.0 L301.0 280.0 L301.1 280.0 L301.2 280.0 L301.3 280.0 L301.4 279.9 L301.5 279.9 L301.6 279.9 L301.7 279.9 L301.8 279.9 L301.9 279.8 L302.0 279.8 L302.1 279.8 L302.2 279.7 L302.3 279.7 L302.4 279.7 L302.5 279.6 L302.6 279.6 L302.7 279.5 L302.8 279.5 L302.9 279.5 L303.0 279.4 L303.1 279.4 L303.2 279.3 L303.3 279.3 L303.4 279.2 L303.5 279.2 L303.6 279.1 L303.7 279.1 L303.8 279.0 L303.8 279.0 L303.9 279.0 L304.0 278.9 L304.1 278.9 L304.2 278.9 L304.3 278.9 L304.4 278.8 L304.5 278.8 L304.6 278.8 L304.7 278.8 L304.8 278.7 L304.9 278.7 L305.0 278.7 L305.1 278.7 L305.2 278.7 L305.3 278.6 L305.4 278.6 L305.5 278.6 L305.6 278.6 L305.7 278.6 L305.8 278.6 L305.9 278.6 L306.0 278.6 L306.1 278.6 L306.2 278.6 L306.3 278.6 L306.4 278.6 L306.5 278.6 L306.6 278.6 L306.7 278.6 L306.8 278.6 L306.9 278.6 L307.0 278.6 L307.1 278.6 L307.2 278.6 L307.2 278.6 L307.3 278.6 L307.4 278.6 L307.5 278.6 L307.6 278.6 L307.7 278.7 L307.8 278.7 L307.9 278.7 L308.0 278.7 L308.1 278.7 L308.2 278.7 L308.3 278.8 L308.4 278.8 L308.5 278.8 L308.6 278.8 L308.7 278.9 L308.8 278.9 L308.9 278.9 L309.0 278.9 L309.1 278.9 L309.2 279.0 L309.3 279.0 L309.4 279.0 L309.5 279.0 L309.6 279.1 L309.7 279.1 L309.8 279.1 L309.9 279.2 L310.0 279.2 L310.1 279.2 L310.2 279.2 L310.3 279.3 L310.4 279.3 L310.5 279.3 L310.6 279.3 L310.7 279.4 L310.7 279.4 L310.8 279.4 L310.9 279.4 L311.0 279.4 L311.1 279.4 L311.2 279.4 L311.3 279.4 L311.4 279.5 L311.5 279.5 L311.6 279.5 L311.7 279.5 L311.8 279.5 L311.9 279.5 L312.0 279.5 L312.1 279.5 L312.2 279.5 L312.3 279.5 L312.4 279.5 L312.5 279.4 L312.6 279.4 L312.7 279.4 L312.8 279.4 L312.9 279.4 L313.0 279.4 L313.1 279.4 L313.2 279.4 L313.3 279.3 L313.4 279.3 L313.5 279.3 L313.6 279.3 L313.7 279.3 L313.8 279.3 L313.9 279.2 L314.0 279.2 L314.1 279.2 L314.2 279.2 L314.2 279.2 L314.3 279.1 L314.4 279.1 L314.5 279.1 L314.6 279.1 L314.7 279.1 L314.8 279.0 L314.9 279.0 L315.0 279.0 L315.1 279.0 L315.2 279.0 L315.3 278.9 L315.4 278.9 L315.5 278.9 L315.6 278.9 L315.7 278.9 L315.8 278.9 L315.9 278.8 L316.0 278.8 L316.1 278.8 L316.2 278.8 L316.3 278.8 L316.4 278.8 L316.5 278.8 L316.6 278.8 L316.7 278.8 L316.8 278.7 L316.9 278.7 L317.0 278.7 L317.1 278.7 L317.2 278.7 L317.3 278.7 L317.4 278.7 L317.5 278.7 L317.6 278.7 L317.6 278.7 L317.7 278.7 L317.8 278.7 L317.9 278.7 L318.0 278.7 L318.1 278.7 L318.2 278.7 L318.3 278.7 L318.4 278.7 L318.5 278.7 L318.6 278.7 L318.7 278.7 L318.8 278.8 L318.9 278.8 L319.0 278.8 L319.1 278.8 L319.2 278.8 L319.3 278.8 L319.4 278.8 L319.5 278.8 L319.6 278.8 L319.7 278.9 L319.8 278.9 L319.9 278.9 L320.0 278.9 L320.1 278.9" fill="none" stroke="#2ee844" stroke-width="1.5" stroke-linejoin="round"/><path d="M184.0 211.6 L185.6 212.6 L187.2 213.5 L188.9 214.5 L190.5 216.1 L192.1 218.0 L193.7 219.9 L195.3 222.1 L197.0 225.0 L198.6 228.0 L200.2 230.9 L201.8 233.7 L203.4 236.4 L205.1 239.1 L206.7 241.8 L208.3 244.5 L209.9 247.2 L211.5 249.9 L213.2 252.3 L214.8 253.8 L216.4 255.3 L218.0 256.8 L219.6 258.3 L221.3 259.6 L222.9 260.7 L224.5 261.7 L226.1 262.7 L227.7 263.8 L229.4 264.6 L231.0 265.4 L232.6 266.1 L234.2 266.9 L235.8 267.6 L237.5 268.4 L239.1 269.1 L240.7 269.6 L242.3 270.0 L243.9 270.5 L245.6 271.0 L247.2 271.5 L248.8 271.9 L250.4 272.4 L252.0 272.7 L253.7 273.0 L255.3 273.4 L256.9 273.7 L258.5 274.0 L260.1 274.3 L261.8 274.6 L263.4 274.9 L265.0 275.2 L266.6 275.4 L268.2 275.6 L269.9 275.8 L271.5 276.0 L273.1 276.2 L274.7 276.4 L276.3 276.6 L278.0 276.8 L279.6 277.0 L281.2 277.2 L282.8 277.3 L284.4 277.5 L286.1 277.6 L287.7 277.8 L289.3 277.9 L290.9 278.0 L292.5 278.2 L294.2 278.3 L295.8 278.3 L297.4 278.4 L299.0 278.4 L300.6 278.4 L302.3 278.5 L303.9 278.5 L305.5 278.5 L307.1 278.6 L308.7 278.6 L310.4 278.6 L312.0 278.7 L313.6 278.7 L315.2 278.7 L316.8 278.7 L318.5 278.7 L320.1 278.7 L321.7 278.7 L323.3 278.7 L324.9 278.7 L326.6 278.7 L328.2 278.7 L329.8 278.7 L331.4 278.7 L333.0 278.7 L334.7 278.7 L336.3 278.7 L337.9 278.7 L339.5 278.7 L341.1 278.7 L342.8 278.7 L344.4 278.7 L346.0 278.7 L347.6 278.7 L349.2 278.7 L350.9 278.7 L352.5 278.7 L354.1 278.7 L355.7 278.7 L357.3 278.7 L359.0 278.7 L360.6 278.7 L362.2 278.7 L363.8 278.7 L365.4 278.7 L367.1 278.7 L368.7 278.7 L370.3 278.7 L371.9 278.7 L373.5 278.7 L375.2 278.7 L376.8 278.7 L378.4 278.7 L380.0 278.7 L381.6 278.7 L383.3 278.7 L384.9 278.7 L386.5 278.7 L388.1 278.7 L389.7 278.7 L391.4 278.7 L393.0 278.7 L394.6 278.7 L396.2 278.7 L397.8 278.7 L399.5 278.7 L401.1 278.7 L402.7 278.7 L404.3 278.7 L405.9 278.7 L407.6 278.7 L409.2 278.7 L410.8 278.8 L412.4 278.8 L414.0 278.8 L415.7 278.8 L417.3 278.8 L418.9 278.8 L420.5 278.8 L422.1 278.8 L423.8 278.8 L425.4 278.8 L427.0 278.8 L428.6 278.8 L430.2 278.8 L431.9 278.8 L433.5 278.8 L435.1 278.8 L436.7 278.8 L438.3 278.8 L440.0 278.8 L441.6 278.8 L443.2 278.8 L444.8 278.8 L446.4 278.8 L448.1 278.8 L449.7 278.8 L451.3 278.8 L452.9 278.8 L454.5 278.8 L456.2 278.8 L457.8 278.8 L459.4 278.8 L461.0 278.8 L462.6 278.8 L464.3 278.8 L465.9 278.8 L467.5 278.8 L469.1 278.8 L470.7 278.8 L472.4 278.8 L474.0 278.8 L475.6 278.8 L477.2 278.8 L478.8 278.8 L480.5 278.8 L482.1 278.8 L483.7 278.8 L485.3 278.8 L486.9 278.8 L488.6 278.8 L490.2 278.8 L491.8 278.8 L493.4 278.8 L495.0 278.8 L496.7 278.8 L498.3 278.8 L499.9 278.8 L501.5 278.8 L503.1 278.8 L504.8 278.8 L506.4 278.8 L508.0 278.8" fill="none" stroke="#fff" stroke-width="2"/><path d="M189.5 342.2 L191.1 339.8 L192.7 337.3 L194.3 334.9 L195.9 332.1 L197.5 328.9 L199.1 325.7 L200.7 322.6 L202.2 320.4 L203.8 318.1 L205.4 315.8 L207.0 314.1 L208.6 312.7 L210.2 311.3 L211.8 309.9 L213.4 308.5 L215.0 307.2 L216.6 305.8 L218.2 304.5 L219.8 303.1 L221.4 301.8 L222.9 300.5 L224.5 299.1 L226.1 297.8 L227.7 296.5 L229.3 295.6 L230.9 294.9 L232.5 294.2 L234.1 293.5 L235.7 292.7 L237.3 292.0 L238.9 291.3 L240.5 290.7 L242.1 290.2 L243.7 289.6 L245.2 289.0 L246.8 288.5 L248.4 287.9 L250.0 287.5 L251.6 287.1 L253.2 286.7 L254.8 286.3 L256.4 285.9 L258.0 285.5 L259.6 285.1 L261.2 284.7 L262.8 284.3 L264.4 284.0 L265.9 283.8 L267.5 283.6 L269.1 283.4 L270.7 283.2 L272.3 283.0 L273.9 282.8 L275.5 282.6 L277.1 282.4 L278.7 282.2 L280.3 282.0 L281.9 281.8 L283.5 281.6 L285.1 281.4 L286.6 281.2 L288.2 281.0 L289.8 280.8 L291.4 280.6 L293.0 280.4 L294.6 280.3 L296.2 280.2 L297.8 280.1 L299.4 280.1 L301.0 280.0 L302.6 279.9 L304.2 279.8 L305.8 279.8 L307.4 279.7 L308.9 279.6 L310.5 279.5 L312.1 279.5 L313.7 279.4 L315.3 279.4 L316.9 279.4 L318.5 279.4 L320.1 279.4 L321.7 279.4 L323.3 279.4 L324.9 279.4 L326.5 279.4 L328.1 279.4 L329.6 279.4 L331.2 279.4 L332.8 279.4 L334.4 279.4 L336.0 279.4 L337.6 279.4 L339.2 279.4 L340.8 279.4 L342.4 279.4 L344.0 279.4 L345.6 279.4 L347.2 279.4 L348.8 279.4 L350.3 279.4 L351.9 279.4 L353.5 279.4 L355.1 279.4 L356.7 279.4 L358.3 279.4 L359.9 279.4 L361.5 279.4 L363.1 279.3 L364.7 279.3 L366.3 279.3 L367.9 279.3 L369.5 279.3 L371.0 279.3 L372.6 279.3 L374.2 279.3 L375.8 279.3 L377.4 279.3 L379.0 279.3 L380.6 279.3 L382.2 279.3 L383.8 279.3 L385.4 279.3 L387.0 279.3 L388.6 279.3 L390.2 279.3 L391.8 279.3 L393.3 279.3 L394.9 279.3 L396.5 279.3 L398.1 279.3 L399.7 279.3 L401.3 279.3 L402.9 279.3 L404.5 279.3 L406.1 279.3 L407.7 279.3 L409.3 279.3 L410.9 279.3 L412.5 279.3 L414.0 279.3 L415.6 279.3 L417.2 279.3 L418.8 279.3 L420.4 279.3 L422.0 279.3 L423.6 279.3 L425.2 279.3 L426.8 279.3 L428.4 279.3 L430.0 279.3 L431.6 279.3 L433.2 279.3 L434.7 279.3 L436.3 279.3 L437.9 279.3 L439.5 279.3 L441.1 279.3 L442.7 279.3 L444.3 279.3 L445.9 279.3 L447.5 279.3 L449.1 279.3 L450.7 279.3 L452.3 279.3 L453.9 279.3 L455.4 279.3 L457.0 279.3 L458.6 279.3 L460.2 279.2 L461.8 279.2 L463.4 279.2 L465.0 279.2 L466.6 279.2 L468.2 279.2 L469.8 279.2 L471.4 279.2 L473.0 279.2 L474.6 279.2 L476.2 279.2 L477.7 279.2 L479.3 279.2 L480.9 279.2 L482.5 279.2 L484.1 279.2 L485.7 279.2 L487.3 279.2 L488.9 279.2 L490.5 279.2 L492.1 279.2 L493.7 279.2 L495.3 279.2 L496.9 279.2 L498.4 279.2 L500.0 279.2 L501.6 279.2 L503.2 279.2 L504.8 279.2 L506.4 279.2 L508.0 279.2" fill="none" stroke="#fff" stroke-width="2"/><line x1="189.5" y1="279.0" x2="508.0" y2="279.0" stroke="#e01818" stroke-width="1.8"/><text x="185.3" y="363.7" class="tk" text-anchor="middle">0</text><text x="217.7" y="363.7" class="tk" text-anchor="middle">1</text><text x="250.1" y="363.7" class="tk" text-anchor="middle">2</text><text x="282.5" y="363.7" class="tk" text-anchor="middle">3</text><text x="314.9" y="363.7" class="tk" text-anchor="middle">4</text><text x="347.3" y="363.7" class="tk" text-anchor="middle">5</text><text x="379.7" y="363.7" class="tk" text-anchor="middle">6</text><text x="412.1" y="363.7" class="tk" text-anchor="middle">7</text><text x="444.5" y="363.7" class="tk" text-anchor="middle">8</text><text x="476.9" y="363.7" class="tk" text-anchor="middle">9</text><text x="510.3" y="363.7" class="tk" text-anchor="middle">10</text><text x="335.6" y="370.5" class="ax" text-anchor="middle">Distance/nm</text><text x="164" y="283.5" class="tk">P(u)</text>
<rect x="561.0" y="33.0" width="325.0" height="143.8" fill="#000"/><line x1="594.0" y1="33.0" x2="594.0" y2="176.8" stroke="#4e4e1e" stroke-width="1"/><line x1="626.4" y1="33.0" x2="626.4" y2="176.8" stroke="#4e4e1e" stroke-width="1"/><line x1="658.9" y1="33.0" x2="658.9" y2="176.8" stroke="#4e4e1e" stroke-width="1"/><line x1="691.3" y1="33.0" x2="691.3" y2="176.8" stroke="#4e4e1e" stroke-width="1"/><line x1="723.8" y1="33.0" x2="723.8" y2="176.8" stroke="#4e4e1e" stroke-width="1"/><line x1="756.2" y1="33.0" x2="756.2" y2="176.8" stroke="#4e4e1e" stroke-width="1"/><line x1="788.6" y1="33.0" x2="788.6" y2="176.8" stroke="#4e4e1e" stroke-width="1"/><line x1="821.1" y1="33.0" x2="821.1" y2="176.8" stroke="#4e4e1e" stroke-width="1"/><line x1="853.5" y1="33.0" x2="853.5" y2="176.8" stroke="#4e4e1e" stroke-width="1"/><line x1="561.0" y1="170.5" x2="886.0" y2="170.5" stroke="#4e4e1e" stroke-width="1"/><line x1="561.0" y1="156.8" x2="886.0" y2="156.8" stroke="#4e4e1e" stroke-width="1"/><line x1="561.0" y1="143.2" x2="886.0" y2="143.2" stroke="#4e4e1e" stroke-width="1"/><line x1="561.0" y1="129.5" x2="886.0" y2="129.5" stroke="#4e4e1e" stroke-width="1"/><line x1="561.0" y1="115.8" x2="886.0" y2="115.8" stroke="#4e4e1e" stroke-width="1"/><line x1="561.0" y1="102.2" x2="886.0" y2="102.2" stroke="#4e4e1e" stroke-width="1"/><line x1="561.0" y1="88.5" x2="886.0" y2="88.5" stroke="#4e4e1e" stroke-width="1"/><line x1="561.0" y1="74.8" x2="886.0" y2="74.8" stroke="#4e4e1e" stroke-width="1"/><line x1="561.0" y1="61.1" x2="886.0" y2="61.1" stroke="#4e4e1e" stroke-width="1"/><line x1="561.0" y1="47.5" x2="886.0" y2="47.5" stroke="#4e4e1e" stroke-width="1"/><path d="M626.6 166.0 L627.9 170.4 L629.2 169.6 L630.5 170.6 L631.8 170.7 L633.1 168.2 L634.4 167.9 L635.7 171.5 L637.0 169.0 L638.3 168.9 L639.6 172.2 L640.9 169.8 L642.2 171.4 L643.5 169.7 L644.8 170.4 L646.1 168.1 L647.4 170.2 L648.7 171.2 L650.0 169.6 L651.3 170.5 L652.6 170.1 L653.9 167.4 L655.2 170.3 L656.5 169.5 L657.8 168.2 L659.1 166.9 L660.4 170.3 L661.7 168.2 L663.0 169.0 L664.3 169.3 L665.6 168.3 L666.9 168.9 L668.2 166.2 L669.5 167.6 L670.8 165.7 L672.1 167.6 L673.4 167.0 L674.7 163.1 L676.0 162.6 L677.3 162.4 L678.6 165.1 L679.9 162.1 L681.2 162.3 L682.5 160.3 L683.8 160.6 L685.1 159.4 L686.4 158.6 L687.7 159.0 L689.0 158.4 L690.3 159.2 L691.6 157.5 L692.9 157.3 L694.2 155.7 L695.5 155.0 L696.8 152.3 L698.1 148.8 L699.4 150.6 L700.7 149.7 L702.0 147.8 L703.3 144.1 L704.6 142.6 L705.9 138.2 L707.2 138.7 L708.5 135.4 L709.8 132.0 L711.1 128.0 L712.4 127.9 L713.7 124.9 L715.0 117.4 L716.3 116.9 L717.6 110.2 L718.9 104.0 L720.2 99.5 L721.5 96.0 L722.8 89.9 L724.1 79.6 L725.4 73.9 L726.7 63.4 L728.0 59.5 L729.3 55.4 L730.6 61.6 L731.9 69.2 L733.2 76.9 L734.5 89.6 L735.8 97.7 L737.1 106.2 L738.4 117.6 L739.7 123.0 L741.0 130.6 L742.3 138.4 L743.6 144.6 L744.9 146.0 L746.2 149.0 L747.5 156.0 L748.8 156.1 L750.1 160.8 L751.4 162.3 L752.7 161.7 L754.0 163.9 L755.3 165.0 L756.6 166.4 L757.9 167.0 L759.2 167.7 L760.5 168.8 L761.8 171.0 L763.1 169.3 L764.4 169.2 L765.7 170.8 L767.0 168.9 L768.3 169.4 L769.6 172.7 L770.9 170.9 L772.2 171.0 L773.5 168.6 L774.8 170.3 L776.1 171.0 L777.4 168.5 L778.7 171.0 L780.0 171.1 L781.3 168.5 L782.6 171.0 L783.9 170.2 L785.2 171.1 L786.5 169.6 L787.8 171.1 L789.1 171.2 L790.4 168.1 L791.7 168.3 L793.0 171.0 L794.3 172.2 L795.6 169.1 L796.9 170.0 L798.2 170.6 L799.5 169.4 L800.8 169.6 L802.1 169.4 L803.4 169.6 L804.7 170.6 L806.0 169.3 L807.3 169.7 L808.6 171.4 L809.9 168.1 L811.2 170.5 L812.5 171.2 L813.8 169.4 L815.1 169.0 L816.4 171.5 L817.7 169.1 L819.0 168.8 L820.3 169.9 L821.6 171.1 L822.9 168.4 L824.2 169.4 L825.5 169.5 L828.3 163.5" fill="none" stroke="#2fd23a" stroke-width="1.2"/><path d="M627.5 170.2 L640.0 170.0 L659.2 169.0 L674.2 165.1 L691.4 156.9 L701.4 147.0 L710.4 131.9 L716.4 115.3 L721.0 97.3 L724.0 82.2 L726.4 67.1 L727.8 59.0 L729.1 55.7 L730.3 58.5 L731.5 64.1 L733.9 82.2 L736.0 100.3 L739.0 121.4 L743.0 142.5 L748.1 156.0 L754.1 164.2 L761.7 169.0 L770.7 170.8 L788.8 170.2 L826.5 170.2" fill="none" stroke="#e63a1e" stroke-width="2" stroke-linejoin="round"/><text x="561.5" y="188.2" class="tk" text-anchor="middle">0</text><text x="594.0" y="188.2" class="tk" text-anchor="middle">5</text><text x="627.6" y="188.2" class="tk" text-anchor="middle">10</text><text x="660.1" y="188.2" class="tk" text-anchor="middle">15</text><text x="692.5" y="188.2" class="tk" text-anchor="middle">20</text><text x="725.0" y="188.2" class="tk" text-anchor="middle">25</text><text x="757.4" y="188.2" class="tk" text-anchor="middle">30</text><text x="789.9" y="188.2" class="tk" text-anchor="middle">35</text><text x="822.3" y="188.2" class="tk" text-anchor="middle">40</text><text x="854.8" y="188.2" class="tk" text-anchor="middle">45</text><text x="887.2" y="188.2" class="tk" text-anchor="middle">50</text>
<rect x="562.3" y="205.0" width="323.7" height="144.4" fill="#000"/><line x1="616.3" y1="205.0" x2="616.3" y2="349.4" stroke="#4e4e1e" stroke-width="1"/><line x1="670.3" y1="205.0" x2="670.3" y2="349.4" stroke="#4e4e1e" stroke-width="1"/><line x1="724.3" y1="205.0" x2="724.3" y2="349.4" stroke="#4e4e1e" stroke-width="1"/><line x1="778.3" y1="205.0" x2="778.3" y2="349.4" stroke="#4e4e1e" stroke-width="1"/><line x1="832.3" y1="205.0" x2="832.3" y2="349.4" stroke="#4e4e1e" stroke-width="1"/><line x1="562.3" y1="218.1" x2="886.0" y2="218.1" stroke="#4e4e1e" stroke-width="1"/><line x1="562.3" y1="231.2" x2="886.0" y2="231.2" stroke="#4e4e1e" stroke-width="1"/><line x1="562.3" y1="244.4" x2="886.0" y2="244.4" stroke="#4e4e1e" stroke-width="1"/><line x1="562.3" y1="257.5" x2="886.0" y2="257.5" stroke="#4e4e1e" stroke-width="1"/><line x1="562.3" y1="270.6" x2="886.0" y2="270.6" stroke="#4e4e1e" stroke-width="1"/><line x1="562.3" y1="283.7" x2="886.0" y2="283.7" stroke="#4e4e1e" stroke-width="1"/><line x1="562.3" y1="296.8" x2="886.0" y2="296.8" stroke="#4e4e1e" stroke-width="1"/><line x1="562.3" y1="310.0" x2="886.0" y2="310.0" stroke="#4e4e1e" stroke-width="1"/><line x1="562.3" y1="323.1" x2="886.0" y2="323.1" stroke="#4e4e1e" stroke-width="1"/><line x1="562.3" y1="336.2" x2="886.0" y2="336.2" stroke="#4e4e1e" stroke-width="1"/><line x1="573.1" y1="342.5" x2="573.1" y2="349.4" stroke="#55553a" stroke-width="1"/><line x1="583.9" y1="342.5" x2="583.9" y2="349.4" stroke="#55553a" stroke-width="1"/><line x1="594.7" y1="342.5" x2="594.7" y2="349.4" stroke="#55553a" stroke-width="1"/><line x1="605.5" y1="342.5" x2="605.5" y2="349.4" stroke="#55553a" stroke-width="1"/><line x1="627.1" y1="342.5" x2="627.1" y2="349.4" stroke="#55553a" stroke-width="1"/><line x1="637.9" y1="342.5" x2="637.9" y2="349.4" stroke="#55553a" stroke-width="1"/><line x1="648.7" y1="342.5" x2="648.7" y2="349.4" stroke="#55553a" stroke-width="1"/><line x1="659.5" y1="342.5" x2="659.5" y2="349.4" stroke="#55553a" stroke-width="1"/><line x1="681.1" y1="342.5" x2="681.1" y2="349.4" stroke="#55553a" stroke-width="1"/><line x1="691.9" y1="342.5" x2="691.9" y2="349.4" stroke="#55553a" stroke-width="1"/><line x1="702.7" y1="342.5" x2="702.7" y2="349.4" stroke="#55553a" stroke-width="1"/><line x1="713.5" y1="342.5" x2="713.5" y2="349.4" stroke="#55553a" stroke-width="1"/><line x1="735.1" y1="342.5" x2="735.1" y2="349.4" stroke="#55553a" stroke-width="1"/><line x1="745.9" y1="342.5" x2="745.9" y2="349.4" stroke="#55553a" stroke-width="1"/><line x1="756.7" y1="342.5" x2="756.7" y2="349.4" stroke="#55553a" stroke-width="1"/><line x1="767.5" y1="342.5" x2="767.5" y2="349.4" stroke="#55553a" stroke-width="1"/><line x1="789.1" y1="342.5" x2="789.1" y2="349.4" stroke="#55553a" stroke-width="1"/><line x1="799.9" y1="342.5" x2="799.9" y2="349.4" stroke="#55553a" stroke-width="1"/><line x1="810.7" y1="342.5" x2="810.7" y2="349.4" stroke="#55553a" stroke-width="1"/><line x1="821.5" y1="342.5" x2="821.5" y2="349.4" stroke="#55553a" stroke-width="1"/><line x1="843.1" y1="342.5" x2="843.1" y2="349.4" stroke="#55553a" stroke-width="1"/><line x1="853.9" y1="342.5" x2="853.9" y2="349.4" stroke="#55553a" stroke-width="1"/><line x1="864.7" y1="342.5" x2="864.7" y2="349.4" stroke="#55553a" stroke-width="1"/><line x1="875.5" y1="342.5" x2="875.5" y2="349.4" stroke="#55553a" stroke-width="1"/><rect x="573.1" y="288.9" width="10" height="47.3" fill="#ffff00"/><rect x="583.9" y="302.6" width="10" height="33.6" fill="#ffff00"/><rect x="594.7" y="318.2" width="10" height="18.0" fill="#ffff00"/><rect x="605.5" y="323.9" width="10" height="12.3" fill="#ffff00"/><rect x="616.3" y="329.8" width="10" height="6.4" fill="#ffff00"/><rect x="627.1" y="332.1" width="10" height="4.1" fill="#ffff00"/><rect x="637.9" y="334.4" width="10" height="1.8" fill="#d8d838"/><rect x="648.7" y="335.1" width="10" height="1.1" fill="#d8d838"/><rect x="659.5" y="332.5" width="10" height="3.7" fill="#ffff00"/><rect x="670.3" y="335.4" width="10" height="0.8" fill="#77772e"/><rect x="681.1" y="335.6" width="10" height="0.6" fill="#d8d838"/><rect x="691.9" y="335.4" width="10" height="0.8" fill="#77772e"/><rect x="702.7" y="336.2" width="10" height="0.8" fill="#7a2020"/><rect x="713.5" y="332.7" width="10" height="3.5" fill="#ffff00"/><rect x="724.3" y="336.2" width="10" height="2.1" fill="#e01818"/><rect x="735.1" y="336.2" width="10" height="0.5" fill="#e01818"/><rect x="745.9" y="334.5" width="10" height="1.7" fill="#d8d838"/><rect x="756.7" y="334.5" width="10" height="1.7" fill="#d8d838"/><rect x="767.5" y="336.2" width="10" height="0.5" fill="#e01818"/><rect x="778.3" y="336.2" width="10" height="2.1" fill="#e01818"/><rect x="789.1" y="335.2" width="10" height="1.0" fill="#d8d838"/><rect x="799.9" y="335.2" width="10" height="1.0" fill="#d8d838"/><rect x="810.7" y="336.2" width="10" height="1.4" fill="#e01818"/><rect x="821.5" y="335.4" width="10" height="0.8" fill="#77772e"/><rect x="832.3" y="335.4" width="10" height="0.8" fill="#77772e"/><rect x="843.1" y="335.4" width="10" height="0.8" fill="#77772e"/><rect x="853.9" y="335.4" width="10" height="0.8" fill="#77772e"/><rect x="864.7" y="335.4" width="10" height="0.8" fill="#77772e"/><rect x="875.5" y="335.4" width="10" height="0.8" fill="#77772e"/><text x="567.6" y="363.8" class="tk" text-anchor="middle">1</text><text x="578.4" y="363.8" class="tk" text-anchor="middle">2</text><text x="589.3" y="363.8" class="tk" text-anchor="middle">3</text><text x="600.2" y="363.8" class="tk" text-anchor="middle">4</text><text x="611.1" y="363.8" class="tk" text-anchor="middle">5</text><text x="621.9" y="363.8" class="tk" text-anchor="middle">6</text><text x="632.8" y="363.8" class="tk" text-anchor="middle">7</text><text x="643.7" y="363.8" class="tk" text-anchor="middle">8</text><text x="654.5" y="363.8" class="tk" text-anchor="middle">9</text><text x="665.4" y="363.8" class="tk" text-anchor="middle">10</text><text x="676.3" y="363.8" class="tk" text-anchor="middle">11</text><text x="687.1" y="363.8" class="tk" text-anchor="middle">12</text><text x="698.0" y="363.8" class="tk" text-anchor="middle">13</text><text x="708.9" y="363.8" class="tk" text-anchor="middle">14</text><text x="719.8" y="363.8" class="tk" text-anchor="middle">15</text><text x="730.6" y="363.8" class="tk" text-anchor="middle">16</text><text x="741.5" y="363.8" class="tk" text-anchor="middle">17</text><text x="752.4" y="363.8" class="tk" text-anchor="middle">18</text><text x="763.2" y="363.8" class="tk" text-anchor="middle">19</text><text x="774.1" y="363.8" class="tk" text-anchor="middle">20</text><text x="785.0" y="363.8" class="tk" text-anchor="middle">21</text><text x="795.8" y="363.8" class="tk" text-anchor="middle">22</text><text x="806.7" y="363.8" class="tk" text-anchor="middle">23</text><text x="817.6" y="363.8" class="tk" text-anchor="middle">24</text><text x="828.5" y="363.8" class="tk" text-anchor="middle">25</text><text x="839.3" y="363.8" class="tk" text-anchor="middle">26</text><text x="850.2" y="363.8" class="tk" text-anchor="middle">27</text><text x="861.1" y="363.8" class="tk" text-anchor="middle">28</text><text x="871.9" y="363.8" class="tk" text-anchor="middle">29</text><text x="882.8" y="363.8" class="tk" text-anchor="middle">30</text><text x="723" y="371.3" class="ax" text-anchor="middle">Stacking number/-</text><text x="542" y="208.5" class="tk">100</text><text x="542" y="221.6" class="tk">90</text><text x="542" y="234.7" class="tk">80</text><text x="542" y="247.8" class="tk">70</text><text x="542" y="260.9" class="tk">60</text><text x="542" y="274.0" class="tk">50</text><text x="542" y="287.1" class="tk">40</text><text x="542" y="300.2" class="tk">30</text><text x="542" y="313.3" class="tk">20</text><text x="542" y="326.4" class="tk">10</text><text x="542" y="339.5" class="tk">0</text><text x="542" y="352.6" class="tk">-10</text><text x="529.2" y="276.8" class="tk">%</text>
<path d="M2 121.5 H137.5 V133.4 L396 96.2 L137.5 151.3 V192.8 H2 Z" fill="#fff" stroke="#000" stroke-width="1.1" stroke-linejoin="miter"/><path d="M2 261.5 H137.5 V273 L486.7 96.2 L137.5 291 V333.3 H2 Z" fill="#fff" stroke="#000" stroke-width="1.1" stroke-linejoin="miter"/>
</svg>
<div class="co" style="top:126.7px"><span class="k">パターソン</span>関数<br>の極大値間距離<br><span class="k" style="letter-spacing:-1.8px">が</span>表示<span class="k" style="letter-spacing:-1.8px">されます。</span></div>
<div class="co" style="top:266.7px">積層重量割合<span class="k">が</span><br>数値表示<span class="k">されま</span><br><span class="k">す。</span></div>

<!-- taskbar -->
<div class="a" id="tb"></div>
<div class="a" style="left:166px;top:456px;width:206px;height:23.5px;background:#393b40"></div>
<div class="a" style="left:583px;top:456px;width:29px;height:23.5px;background:#38414d"></div>
<div class="a" style="left:902.5px;top:456px;width:2.5px;height:25px;background:#e9d3c8"></div>
<svg class="a" style="left:137.5px;top:456px" width="765" height="25" viewBox="0 0 765 25">
<!-- start -->
<path d="M9.2 8.4l4.2-.6v4.1H9.2zM13.9 7.7l5.2-.8v5H13.9zM9.2 12.4h4.2v4.1l-4.2-.6zM13.9 12.4h5.2v5l-5.2-.8z" fill="#fff"/>
<circle cx="40.1" cy="11.9" r="5.6" fill="none" stroke="#fff" stroke-width="1.5"/>
<!-- task view -->
<rect x="245.3" y="8.2" width="7.6" height="7" fill="none" stroke="#ddd" stroke-width="0.9"/><path d="M243.6 9.6v4.2M254.6 9.6v4.2" stroke="#ddd" stroke-width="0.9"/>
<!-- edge -->
<path d="M273.6 12.6c.1-3.6 2.6-6 6-6c3.6 0 5.6 2.6 5.5 6.1h-7.7c.2 1.7 1.5 2.7 3.5 2.7c1.400 0 2.600-.4 3.600-1v2.700c-1.100.7-2.700 1.100-4.500 1.100c-3.600 0-5.700-2.200-5.700-5.100c0-2.300 1.300-4.100 3.400-5c-1 .9-1.500 2-1.600 3.100h4.800c0-1.600-.8-2.600-2.400-2.600c-2 0-3.900 1.500-4.900 4z" fill="#2a7fd9"/>
<!-- store -->
<path d="M303.700 9.200h11.600v8.600l-11.600-1.100z" fill="#fff"/><path d="M306.700 9.200c0-2.200 1.200-3.500 2.800-3.500s2.800 1.300 2.800 3.500" fill="none" stroke="#fff" stroke-width="1"/><path d="M307.500 11.300h1.700v1.700h-1.700zM309.800 11.300h1.700v1.700h-1.700zM307.500 13.600h1.700v1.700h-1.700zM309.800 13.600h1.700v1.700h-1.700z" fill="#0f1a2b"/>
<!-- outlook -->
<rect x="339.500" y="7.800" width="6.500" height="8" fill="#e8eef8"/><path d="M339.500 8.500l3.200 2.600l3.300-2.600" fill="none" stroke="#1b64b8" stroke-width="0.8"/><path d="M333.300 6.800l7.200-1.400v13.200l-7.200-1.400z" fill="#1667c1"/><ellipse cx="337" cy="12" rx="1.700" ry="2.300" fill="none" stroke="#fff" stroke-width="1.1"/>
<!-- explorer -->
<path d="M363.300 7h4.600l1.200 1.300h6.600v9h-12.400z" fill="#f0d36a"/><rect x="363.300" y="9.600" width="12.400" height="3" fill="#f7e9a4"/><path d="M365.800 12.800h7.400v4.500h-7.400z" fill="#4fb0dc"/><rect x="367.800" y="14.500" width="3.400" height="2.800" fill="#f0d36a"/>
<!-- visual studio -->
<path d="M402.500 5.600l2.800 1.300v10.200l-2.800 1.300l-5.600-5l-2.400 1.900l-1.200-.6v-5.400l1.200-.6l2.400 1.900zM402.500 9.300l-3.300 2.700l3.300 2.700zM394.600 10.600v2.800l1.500-1.400z" fill="#9b4fb5" fill-rule="evenodd"/>
<!-- word -->
<rect x="427.800" y="6.800" width="8" height="10.400" fill="#dfe8f5"/><path d="M430 9h5M430 11h5M430 13h5M430 15h5" stroke="#2b5fa8" stroke-width="0.7"/><path d="M423 6.200l7.200-1.300v14.200l-7.200-1.300z" fill="#2a5caa"/><path d="M424.700 9.800l.9 4.400l1-4.400l1 4.400l.9-4.400" fill="none" stroke="#fff" stroke-width="0.8"/>
<!-- app icon -->
<rect x="453.300" y="5.300" width="13" height="13" fill="#f6f5fb" stroke="#3d2fb5" stroke-width="1.200"/><path d="M461.800 8.600c-3-1.500-5.800.3-5.800 3.300s2.800 4.800 5.800 3.200" fill="none" stroke="#222" stroke-width="1.100"/><path d="M459 9.500h5.500M461.800 9.500v6.500" stroke="#c03030" stroke-width="1"/><path d="M458.500 13h4" stroke="#2e9a3a" stroke-width="0.800"/>
<!-- powerpoint -->
<rect x="488" y="6.800" width="8" height="10.400" fill="#f3dcd4"/><path d="M490.500 9.500h4.500M490.500 12h4.500M490.500 14.500h4.500" stroke="#c6492a" stroke-width="0.800"/><path d="M483 6.200l7.200-1.300v14.200l-7.200-1.300z" fill="#d04a24"/><path d="M485.400 14.800v-5.400h1.700c1.300 0 1.300 2.600 0 2.600h-1.700" fill="none" stroke="#fff" stroke-width="0.900"/>
<!-- underlines -->
<path d="M359.500 23.600h22M389.500 23.600h22M419.500 23.600h22M445.500 23.600h29M479.500 23.600h22" stroke="#e8e4c8" stroke-width="1.200"/>
<!-- tray -->
<path d="M612 13.300l3.300-3.200l3.300 3.200" fill="none" stroke="#ddd" stroke-width="0.9"/>
<rect x="626" y="9.500" width="8.500" height="4.600" fill="#e6e6e6"/><rect x="624.300" y="8.400" width="3.200" height="2.600" fill="#e6e6e6"/>
<g transform="translate(1.5 0)"><path d="M639.500 15.200a5.500 5.500 0 0 1 5.500-5.500M641.500 15.200a3.500 3.500 0 0 1 3.500-3.500M643.300 15.200a1.700 1.700 0 0 1 1.700-1.700" fill="none" stroke="#8a8f96" stroke-width="0.8"/><circle cx="640" cy="8.300" r="0.800" fill="#eee"/></g>
<path d="M653 10.600h1.800l2.400-2.200v7.200l-2.400-2.200h-1.800z" fill="none" stroke="#aaa" stroke-width="0.7"/><path d="M658.800 9.800c1 1.200 1 3.200 0 4.400M660.300 8.600c1.700 2 1.700 4.800 0 6.800" fill="none" stroke="#aaa" stroke-width="0.6"/>
<path d="M668.200 7.500h9v6.500h-3.500l-1.500 2l-.3-2h-3.700z" fill="#fff"/><path d="M670 9.800h5.400M670 11.600h5.400" stroke="#0f1a2b" stroke-width="0.6"/>
<circle cx="686.700" cy="11.700" r="3.900" fill="#d9d9d9"/><path d="M684.900 9.900l3.600 3.600M688.500 9.900l-3.600 3.600" stroke="#0f1a2b" stroke-width="1.200"/>
<rect x="699.800" y="7.200" width="8.800" height="8.800" fill="#fff"/><path d="M702 9.300v2.600c0 3 4.400 3 4.400 0v-2.600" fill="none" stroke="#0f1a2b" stroke-width="1.300"/>
</svg>
<div class="a" id="cort" style="left:188.8px;top:463.1px;font-size:7.4px;line-height:9px;color:#8d8f94;white-space:nowrap;font-feature-settings:&quot;palt&quot;">Cortanaに何か聞いてみてください。</div>
<div class="tbt" style="left:856px;top:458.8px;width:42px">14:42</div>
<div class="tbt" style="left:856px;top:470.2px;width:42px;font-size:7.1px">2016/03/03</div>
</body></html>
